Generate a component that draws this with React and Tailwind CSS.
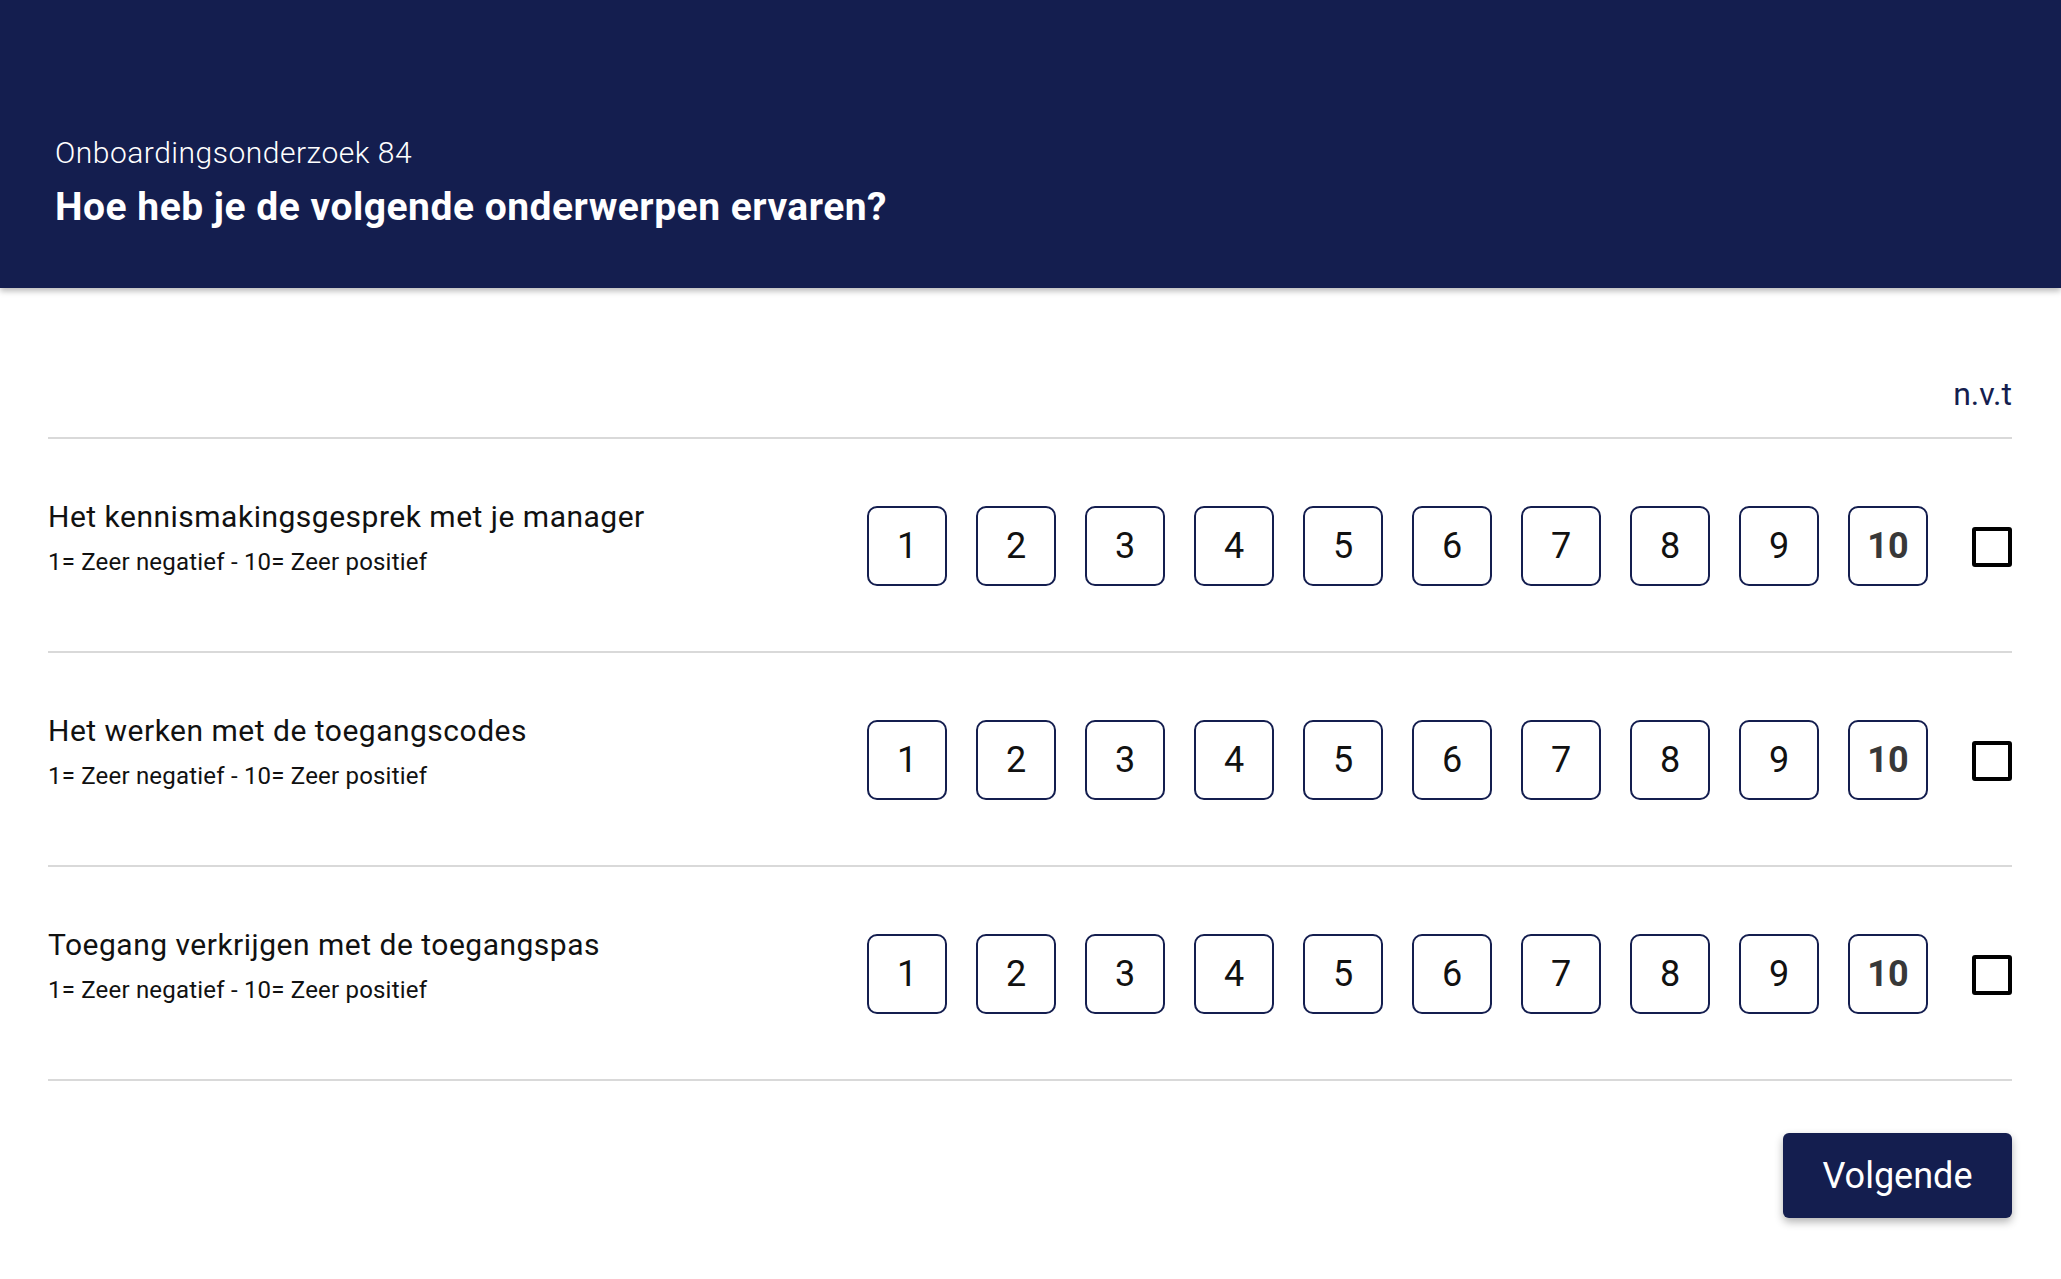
import React from "react";

const questions = [
  "Het kennismakingsgesprek met je manager",
  "Het werken met de toegangscodes",
  "Toegang verkrijgen met de toegangspas",
];

const scores = [1, 2, 3, 4, 5, 6, 7, 8, 9, 10];

function ScoreBox({ value }) {
  const isLast = value === 10;
  return (
    <button
      className={
        "w-[80px] h-[80px] rounded-[10px] border-2 border-[#141e4f] bg-white flex items-center justify-center text-[36px] leading-none " +
        (isLast ? "font-bold text-[#383838]" : "font-normal text-[#111111]")
      }
    >
      {value}
    </button>
  );
}

function QuestionRow({ title }) {
  return (
    <div className="flex items-start pt-[60px] pb-[65px] border-b-2 border-[#d9d9d9]">
      <div className="flex-1">
        <div className="text-[30px] leading-[36px] tracking-[0.5px] text-[#111111]">{title}</div>
        <div className="mt-3 text-[24px] leading-[30px] tracking-[0.2px] text-[#111111]">
          1= Zeer negatief - 10= Zeer positief
        </div>
      </div>
      <div className="mt-[7px] h-[80px] flex items-center">
        <div className="flex gap-[29px]">
          {scores.map((s) => (
            <ScoreBox key={s} value={s} />
          ))}
        </div>
        <div className="ml-[44px] mt-[2px] w-[40px] h-[40px] border-[4px] border-black rounded-[3px]" />
      </div>
    </div>
  );
}

export default function App() {
  return (
    <div className="min-h-screen bg-white font-['Roboto',sans-serif]">
      <header className="h-[288px] bg-[#141e4f] px-[55px] pt-[135px] shadow-[0_3px_6px_rgba(0,0,0,0.28)]">
        <div className="text-[30px] leading-[36px] font-light tracking-[0.5px] text-white">
          Onboardingsonderzoek 84
        </div>
        <h1 className="mt-[14px] text-[39px] leading-[44px] font-bold tracking-[0.5px] text-white">
          Hoe heb je de volgende onderwerpen ervaren?
        </h1>
      </header>

      <main className="pl-[48px] pr-[49px]">
        <div className="flex justify-end pt-[88px] pb-[25px] border-b-2 border-[#d9d9d9]">
          <span className="text-[32px] leading-[36px] text-[#141e4f]">n.v.t</span>
        </div>
        {questions.map((q) => (
          <QuestionRow key={q} title={q} />
        ))}
        <div className="flex justify-end pt-[52px]">
          <button className="w-[229px] h-[85px] rounded-[6px] bg-[#141e4f] text-white text-[36px] shadow-[0_4px_8px_rgba(0,0,0,0.3)]">
            Volgende
          </button>
        </div>
      </main>
    </div>
  );
}
